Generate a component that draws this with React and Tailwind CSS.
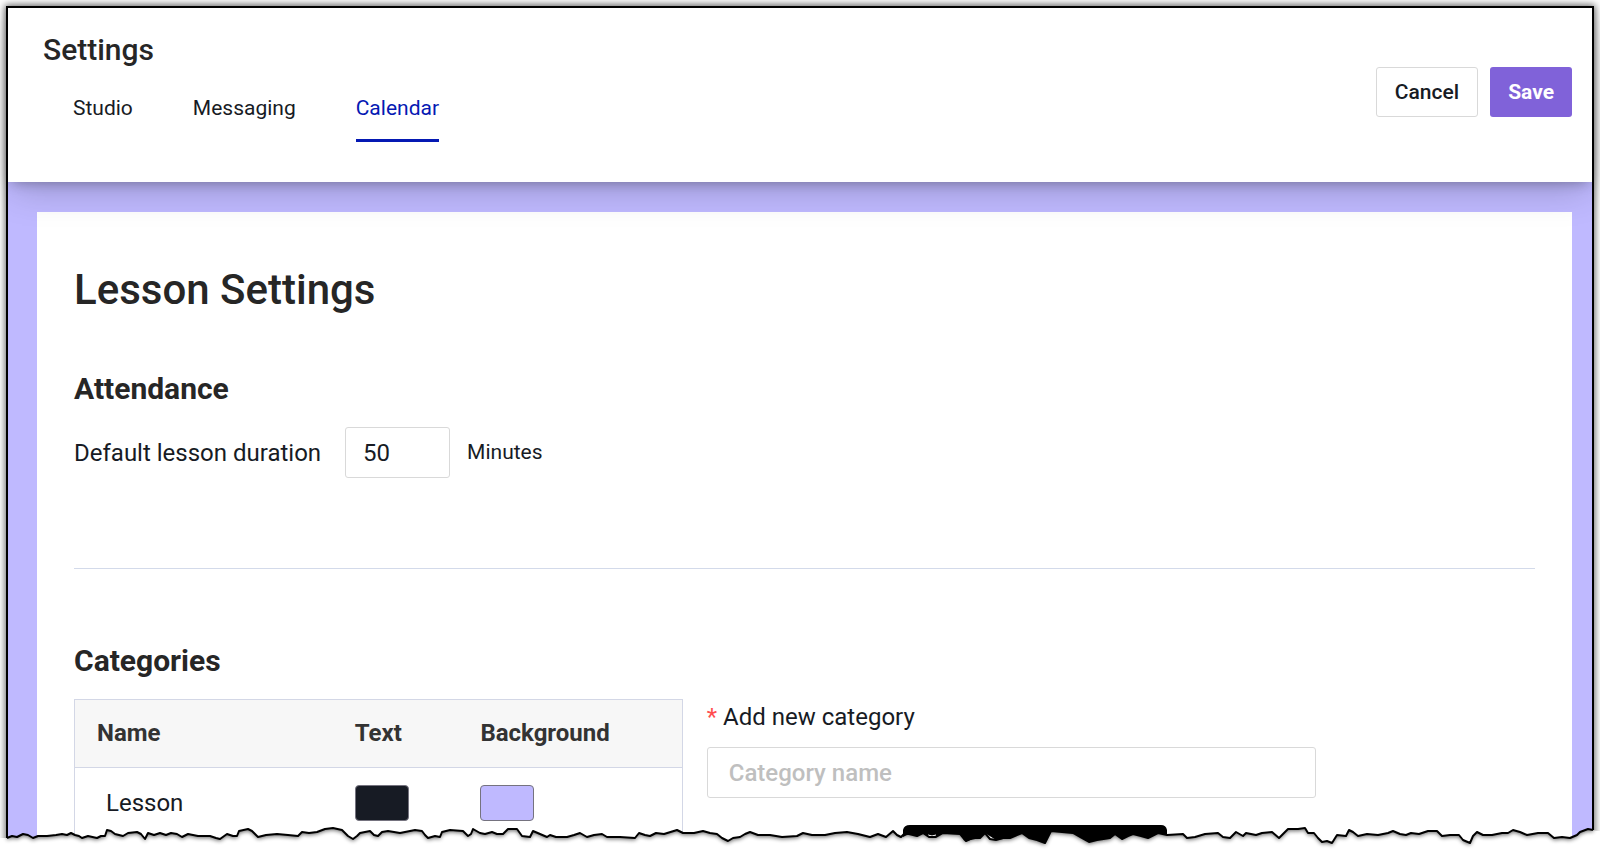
import { useState } from 'react';

const tabs = ['Studio', 'Messaging', 'Calendar'];

const initialCategories = [
  { name: 'Lesson', text: '#171b24', background: '#bfb9ff' },
];

const TEAR =
  'M7 838 L12 836 L17 837 L23 834 L28 835 L33 838 L38 836 L47 836 L56 835 L62 834 L67 835 L71 833 L75 835 L79 836 L82 838 L88 836 L97 838 L101 836 L105 836 L107 830 L111 831 L115 834 L123 836 L128 833 L137 832 L141 834 L145 839 L148 833 L154 835 L160 833 L166 835 L171 833 L177 834 L182 837 L188 834 L198 836 L210 836 L216 838 L220 839 L227 834 L233 836 L237 836 L239 831 L248 829 L252 831 L258 837 L266 835 L277 834 L288 835 L298 836 L302 832 L309 833 L317 832 L325 829 L333 828 L342 830 L348 836 L353 839 L357 836 L360 833 L370 831 L374 835 L378 836 L382 832 L388 831 L400 833 L415 830 L422 831 L425 835 L428 838 L435 836 L440 837 L442 832 L450 830 L463 831 L468 836 L471 834 L473 829 L480 833 L485 834 L492 832 L497 834 L503 834 L508 829 L517 829 L522 836 L530 837 L533 831 L540 834 L547 837 L550 835 L556 837 L567 837 L574 835 L580 833 L587 837 L594 835 L602 834 L607 837 L620 837 L635 838 L639 833 L645 835 L650 836 L656 833 L664 834 L677 830 L683 833 L694 833 L703 831 L710 833 L717 834 L722 838 L728 841 L733 838 L740 837 L745 834 L750 832 L758 835 L770 835 L782 837 L797 836 L803 833 L812 835 L825 835 L835 833 L847 832 L858 834 L870 837 L878 834 L886 837 L893 831 L897 835 L901 837 L904 834 L909 834 L917 836 L923 833 L929 837 L936 837 L943 833 L960 834 L964 839 L966 841 L972 838 L980 838 L985 833 L990 839 L996 840 L1003 838 L1010 838 L1022 833 L1029 838 L1037 840 L1045 843 L1051 831 L1062 832 L1073 833 L1080 837 L1089 842 L1097 840 L1110 838 L1115 834 L1122 839 L1128 836 L1133 834 L1141 836 L1148 838 L1158 833 L1167 835 L1183 834 L1187 838 L1195 837 L1205 834 L1218 833 L1223 837 L1230 838 L1236 832 L1243 836 L1246 833 L1256 835 L1262 833 L1272 832 L1279 838 L1284 833 L1288 829 L1298 829 L1305 828 L1308 833 L1314 833 L1318 838 L1322 842 L1327 841 L1332 843 L1337 835 L1346 836 L1349 830 L1353 832 L1358 836 L1367 834 L1378 835 L1388 833 L1393 831 L1400 834 L1406 835 L1411 833 L1419 834 L1428 831 L1437 831 L1442 836 L1450 835 L1459 835 L1463 840 L1470 843 L1473 836 L1477 832 L1483 835 L1492 835 L1502 833 L1508 833 L1513 830 L1520 832 L1527 835 L1538 833 L1548 833 L1554 838 L1562 837 L1570 838 L1577 835 L1580 832 L1588 829 L1593 830';

const BELOW_TEAR = TEAR + ' L1600 831 V851 H0 V838 Z';

const TornEdge = () => (
  <svg
    className="pointer-events-none absolute bottom-0 left-0 z-20 h-[31px] w-full"
    viewBox="0 820 1600 31"
    preserveAspectRatio="none"
    aria-hidden="true"
  >
    <defs>
      <filter id="tear-shadow" x="-1%" y="-100%" width="102%" height="300%">
        <feGaussianBlur stdDeviation="2" />
      </filter>
      <clipPath id="below-tear">
        <path d={BELOW_TEAR} />
      </clipPath>
    </defs>
    <g clipPath="url(#below-tear)">
      <path d={BELOW_TEAR} fill="#fff" />
      <path
        d={TEAR + ' V815 H7 Z'}
        transform="translate(0 2)"
        fill="#000"
        opacity="0.6"
        filter="url(#tear-shadow)"
      />
    </g>
    {/* Top of the dark bar that the tear cuts through */}
    <path
      d="M903 837 V830 Q904 825 910 825 H1161 Q1166 825 1167 830 V835 L1158 833 L1148 838 L1141 836 L1133 834 L1122 839 L1115 834 L1110 838 L1097 840 L1089 842 L1080 837 L1073 833 L1051 831 L1045 843 L1037 840 L1029 838 L1022 833 L1010 838 L996 840 L985 833 L980 838 L966 841 L960 834 L943 833 L936 837 L929 837 L923 833 L917 836 L909 834 Z"
      fill="#000"
    />
    <path d="M928 835 L932 836 L936 835" fill="none" stroke="#fff" strokeWidth="1" />
    <path d={TEAR} fill="none" stroke="#000" strokeWidth="2" strokeLinejoin="round" />
  </svg>
);

const App = () => {
  const [activeTab, setActiveTab] = useState('Calendar');
  const [duration, setDuration] = useState('50');
  const [categoryName, setCategoryName] = useState('');
  const [categories, setCategories] = useState(initialCategories);

  const updateCategory = (index, field, value) => {
    setCategories(categories.map((c, i) => (i === index ? { ...c, [field]: value } : c)));
  };

  return (
    <div className="relative h-screen overflow-hidden bg-white p-[6px] pb-0 font-['Roboto',sans-serif] text-[#171b24]">
      <div className="flex min-h-full flex-col border-2 border-b-0 border-black bg-[#bfb9ff] shadow-[0_0_7px_1px_rgba(0,0,0,0.6)]">
        <header className="relative z-10 flex items-start justify-between bg-white pb-10 pl-[35px] pr-5 pt-6 shadow-[0_4px_12px_-4px_rgba(0,0,0,0.3),0_10px_36px_-4px_rgba(0,0,0,0.22)]">
          <div>
            <h1 className="text-[30px] font-medium leading-9 text-[#262626]">Settings</h1>
            <nav className="mt-5 flex gap-[60px] pl-[30px]">
              {tabs.map((tab) => (
                <a
                  key={tab}
                  href={'#' + tab.toLowerCase()}
                  onClick={() => setActiveTab(tab)}
                  className={
                    activeTab === tab
                      ? 'border-b-[3px] border-[#0519b3] pb-[18px] pt-2 text-[21px] leading-[25px] text-[#0519b3]'
                      : 'border-b-[3px] border-transparent pb-[18px] pt-2 text-[21px] leading-[25px]'
                  }
                >
                  {tab}
                </a>
              ))}
            </nav>
          </div>
          <div className="flex gap-3 pt-[35px]">
            <button
              type="button"
              className="h-[50px] rounded-[3px] border border-[#d9d9d9] bg-white px-[18px] pt-px text-[21px] font-medium"
            >
              Cancel
            </button>
            <button
              type="button"
              className="h-[50px] rounded-[3px] bg-[#8062d9] px-[18px] pt-px text-[21px] font-bold text-white"
            >
              Save
            </button>
          </div>
        </header>

        <main className="ml-[29px] mr-5 mt-[30px] grow bg-white px-[37px] pt-12">
          <h2 className="text-[42px] font-medium leading-[60px] text-[#262626]">Lesson Settings</h2>

          <section className="mt-12 border-b border-[#d3daea] pb-[90px]">
            <h3 className="text-[30px] font-bold leading-[42px] text-[#262626]">Attendance</h3>
            <div className="mt-[17px] flex items-center">
              <label htmlFor="duration" className="pt-px text-2xl">
                Default lesson duration
              </label>
              <input
                id="duration"
                type="text"
                value={duration}
                onChange={(e) => setDuration(e.target.value)}
                className="ml-6 h-[51px] w-[105px] rounded-[3px] border border-[#d9d9d9] px-[17px] text-2xl"
              />
              <span className="ml-[17px] pt-px text-[21px]">Minutes</span>
            </div>
          </section>

          <section className="mt-[71px]">
            <h3 className="text-[30px] font-bold leading-[42px] text-[#262626]">Categories</h3>
            <div className="mt-[17px] flex items-start gap-6">
              <table className="w-5/12 border-collapse border border-[#d3d7e6] text-left text-2xl">
                <thead>
                  <tr className="h-[68px] border-b border-[#d3d7e6] bg-[#f7f7f7] text-[#333]">
                    <th className="w-[42%] pb-0.5 pl-[22px] font-bold">Name</th>
                    <th className="w-[21%] pb-0.5 pl-[25px] font-bold">Text</th>
                    <th className="pb-0.5 pl-[23px] font-bold">Background</th>
                  </tr>
                </thead>
                <tbody>
                  {categories.map((category, index) => (
                    <tr key={category.name} className="h-[71px]">
                      <td className="pl-[31px]">{category.name}</td>
                      <td className="pl-[25px]">
                        <button
                          type="button"
                          aria-label="Text color"
                          onClick={() => updateCategory(index, 'text', '#171b24')}
                          className="block h-9 w-[54px] rounded border border-[#75737f]"
                          style={{ backgroundColor: category.text }}
                        />
                      </td>
                      <td className="pl-[23px]">
                        <button
                          type="button"
                          aria-label="Background color"
                          onClick={() => updateCategory(index, 'background', '#bfb9ff')}
                          className="block h-9 w-[54px] rounded border border-[#75737f]"
                          style={{ backgroundColor: category.background }}
                        />
                      </td>
                    </tr>
                  ))}
                </tbody>
              </table>

              <div className="w-5/12">
                <label htmlFor="category" className="block text-2xl leading-9">
                  <span className="mr-[6px] text-[#ff4d4f]">*</span>
                  Add new category
                </label>
                <input
                  id="category"
                  type="text"
                  required
                  placeholder="Category name"
                  value={categoryName}
                  onChange={(e) => setCategoryName(e.target.value)}
                  className="mt-3 h-[51px] w-full rounded-[3px] border border-[#d9d9d9] px-[21px] text-2xl font-medium placeholder:text-[#bfbfbf]"
                />
              </div>
            </div>
          </section>
        </main>
      </div>
      <TornEdge />
    </div>
  );
};

export default App;
